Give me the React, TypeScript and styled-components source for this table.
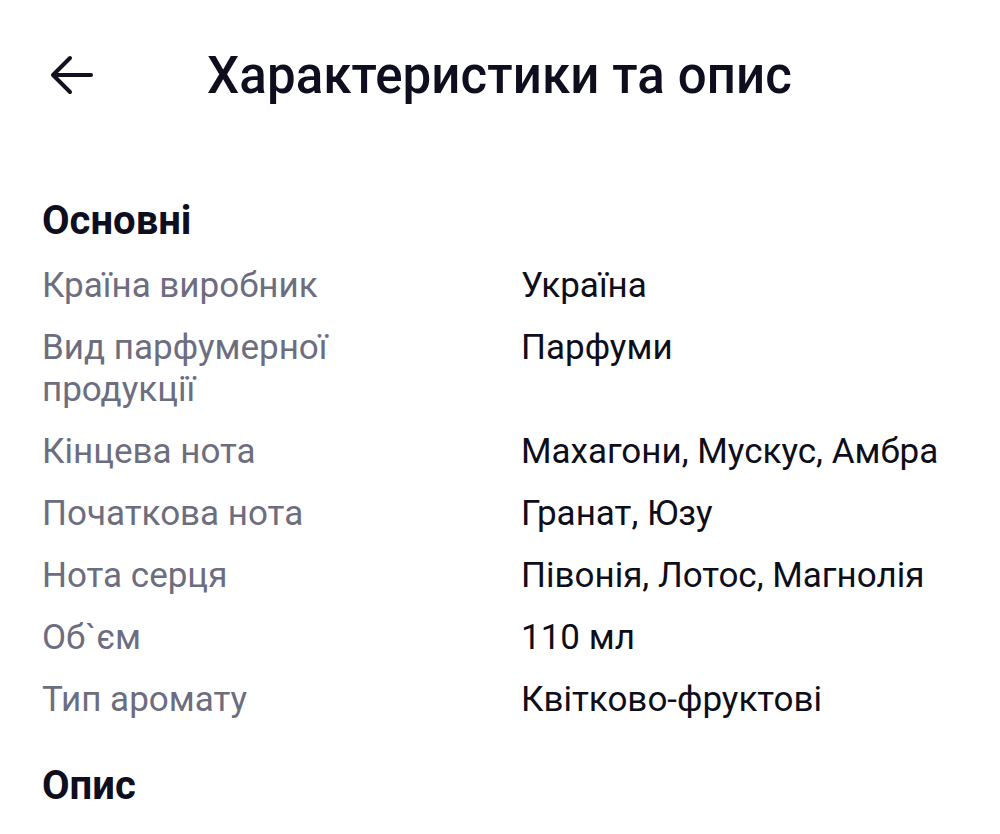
import React from "react";
import styled, { createGlobalStyle } from "styled-components";

const Global = createGlobalStyle`
  html, body { margin: 0; padding: 0; background: #ffffff; }
  body { font-family: Roboto, "Noto Sans", sans-serif; -webkit-font-smoothing: antialiased; }
`;

const Page = styled.div`
  width: 1000px;
  height: 834px;
  overflow: hidden;
  background: #ffffff;
`;

const Header = styled.header`
  display: flex;
  align-items: center;
  height: 150px;
  padding-left: 48px;
  box-sizing: border-box;
`;

const BackButton = styled.button`
  display: flex;
  align-items: center;
  justify-content: center;
  width: 48px;
  height: 48px;
  padding: 0;
  border: none;
  background: none;
  color: #11111f;
  margin-right: 111px;
`;

const Title = styled.h1`
  margin: 0;
  font-size: 51px;
  font-weight: 500;
  color: #0e0e1e;
  letter-spacing: 0.1px;
`;

const Content = styled.main`
  padding: 47px 42px 0 42px;
`;

const SectionTitle = styled.h2<{ $top?: number }>`
  margin: ${(p) => p.$top ?? 0}px 0 20px 0;
  font-size: 40px;
  line-height: 48px;
  font-weight: 700;
  color: #0e0e1e;
`;

const Specs = styled.dl`
  display: grid;
  grid-template-columns: 479px 1fr;
  row-gap: 20px;
  margin: 0;
`;

const Label = styled.dt`
  margin: 0;
  font-size: 35px;
  line-height: 42px;
  color: #6d6d80;
  max-width: 320px;
`;

const Value = styled.dd`
  margin: 0;
  font-size: 35px;
  line-height: 42px;
  color: #0e0e1a;
`;

const specs: [string, string][] = [
  ["Країна виробник", "Україна"],
  ["Вид парфумерної продукції", "Парфуми"],
  ["Кінцева нота", "Махагони, Мускус, Амбра"],
  ["Початкова нота", "Гранат, Юзу"],
  ["Нота серця", "Півонія, Лотос, Магнолія"],
  ["Об`єм", "110 мл"],
  ["Тип аромату", "Квітково-фруктові"],
];

export default function App() {
  return (
    <Page>
      <Global />
      <Header>
        <BackButton aria-label="Назад">
          <svg width="44" height="40" viewBox="0 0 44 40" fill="none" stroke="currentColor" strokeWidth="4" strokeLinecap="round" strokeLinejoin="round">
            <path d="M41 20H4" />
            <path d="M20 3L3 20l17 17" />
          </svg>
        </BackButton>
        <Title>Характеристики та опис</Title>
      </Header>
      <Content>
        <SectionTitle>Основні</SectionTitle>
        <Specs>
          {specs.map(([k, v]) => (
            <React.Fragment key={k}>
              <Label>{k}</Label>
              <Value>{v}</Value>
            </React.Fragment>
          ))}
        </Specs>
        <SectionTitle $top={41}>Опис</SectionTitle>
      </Content>
    </Page>
  );
}
